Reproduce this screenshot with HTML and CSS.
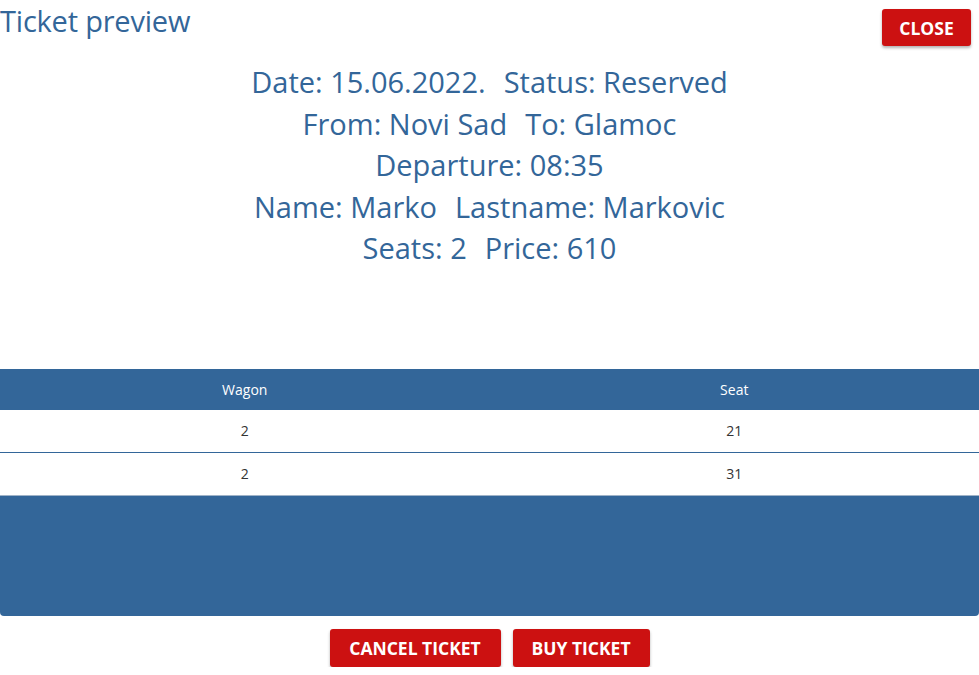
FILE: index.html
```html
<!DOCTYPE html>
<html>
<head>
<meta charset="utf-8">
<link rel="stylesheet" href="styles.css">
</head>
<body>
<div class="dialog">
  <header class="top">
    <h1 class="title">Ticket preview</h1>
    <button class="btn btn-close">Close</button>
  </header>
  <div class="info">
    <div class="line"><span>Date: 15.06.2022.</span><span>Status: Reserved</span></div>
    <div class="line"><span>From: Novi Sad</span><span>To: Glamoc</span></div>
    <div class="line"><span>Departure: 08:35</span></div>
    <div class="line"><span>Name: Marko</span><span>Lastname: Markovic</span></div>
    <div class="line"><span>Seats: 2</span><span>Price: 610</span></div>
  </div>
  <div class="grid">
    <div class="row head"><div class="cell">Wagon</div><div class="cell">Seat</div></div>
    <div class="row body first"><div class="cell">2</div><div class="cell">21</div></div>
    <div class="row body"><div class="cell">2</div><div class="cell">31</div></div>
    <div class="foot"></div>
  </div>
  <div class="actions">
    <button class="btn btn-cancel">Cancel ticket</button>
    <button class="btn btn-buy">Buy ticket</button>
  </div>
</div>
</body>
</html>
```
FILE: styles.css
```css
* { box-sizing: border-box; }
html, body { margin: 0; padding: 0; background: #fff; }
body { font-family: "Open Sans", "Noto Sans", sans-serif; color: #336699; }
.dialog { width: 979px; }
.top { display: flex; justify-content: space-between; align-items: flex-start; height: 46px; }
.title { margin: 0; font-weight: 400; font-size: 29px; line-height: 42px; color: #336699; letter-spacing: -0.2px; }
.btn {
  font-family: "Open Sans", "Noto Sans", sans-serif;
  background: #cc1111; color: #fff; border: none; border-radius: 3px;
  text-transform: uppercase; font-weight: 700; font-size: 17.5px;
  box-shadow: 0 2px 3px rgba(0,0,0,0.3);
  cursor: pointer; padding: 0;
}
.btn-close { margin-top: 9px; margin-right: 8px; width: 89px; height: 37px; }
.info { margin-top: 15px; display: flex; flex-direction: column; align-items: center; font-size: 29px; line-height: 41.5px; }
.line { display: flex; gap: 18px; }
.grid { margin-top: 100px; }
.row { display: grid; grid-template-columns: 1fr 1fr; }
.cell { text-align: center; font-size: 14px; }
.head { background: #336699; color: #fff; height: 41px; align-items: center; }
.body { height: 42px; align-items: center; color: #333; background: #fff; }
.body.first { border-bottom: 1px solid #336699; height: 43px; }
.foot { height: 121px; background: #336699; border-top: 1px solid #9fb3c8; border-radius: 0 0 4px 4px; }
.actions { display: flex; justify-content: center; gap: 12px; margin-top: 13px; }
.btn-cancel { width: 171px; height: 38px; }
.btn-buy { width: 137px; height: 38px; }
```
